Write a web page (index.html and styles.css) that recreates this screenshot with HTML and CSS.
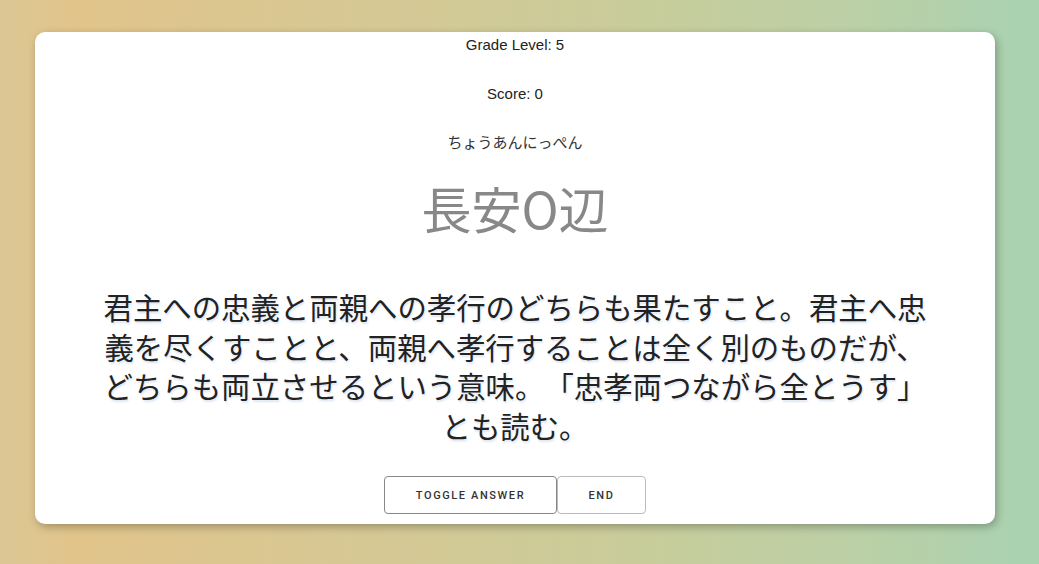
FILE: index.html
```html
<!DOCTYPE html>
<html lang="ja">
<head>
<meta charset="utf-8">
<title>Quiz</title>
<link rel="stylesheet" href="styles.css">
</head>
<body>
<main class="card">
  <p class="meta">Grade Level: 5</p>
  <p class="meta meta-last">Score: 0</p>
  <p class="reading">ちょうあんにっぺん</p>
  <h1 class="word">長安O辺</h1>
  <p class="definition">君主への忠義と両親への孝行のどちらも果たすこと。君主へ忠義を尽くすことと、両親へ孝行することは全く別のものだが、どちらも両立させるという意味。「忠孝両つながら全とうす」とも読む。</p>
  <div class="actions">
    <button class="btn btn-primary" type="button">Toggle Answer</button>
    <button class="btn" type="button">End</button>
  </div>
</main>
</body>
</html>
```

FILE: styles.css
```css
html, body {
  margin: 0;
  height: 100%;
}
body {
  background: linear-gradient(90deg, #dbc795 0%, #e1c48a 7%, #d6c894 35%, #c9cc9a 60%, #bcd0a6 82%, #a8d2b1 100%);
  padding: 32px 44px 40px 35px;
  box-sizing: border-box;
  font-family: "Liberation Sans", Arial, "Noto Sans CJK JP", sans-serif;
  color: #222;
}
.card {
  background: #fff;
  border-radius: 10px;
  box-shadow: 2px 3px 8px rgba(0, 0, 0, 0.28);
  height: 492px;
  box-sizing: border-box;
  display: flex;
  flex-direction: column;
  align-items: center;
  padding-top: 4px;
}
.meta {
  margin: 0 0 32px;
  font-size: 15px;
  line-height: 17px;
}
.meta-last {
  margin-bottom: 31px;
}
.reading {
  margin: 0;
  font-family: "Noto Sans CJK JP", sans-serif;
  font-size: 15px;
  line-height: 18px;
  color: #333;
}
.word {
  margin: 26px 0 0;
  font-family: "Noto Sans CJK JP", sans-serif;
  font-weight: 400;
  font-size: 50px;
  line-height: 60px;
  color: #888;
}
.definition {
  margin: 50px 0 0;
  width: 840px;
  text-align: center;
  font-family: "Noto Sans CJK JP", sans-serif;
  font-size: 29.4px;
  line-height: 39.5px;
  color: #222;
  text-spacing-trim: space-all;
  text-shadow: 1px 2px 2px rgba(120, 150, 200, 0.25);
}
.actions {
  display: flex;
  margin-top: 31px;
}
.btn {
  font-family: Roboto, "Liberation Sans", sans-serif;
  font-weight: 500;
  font-size: 11px;
  letter-spacing: 1.6px;
  text-transform: uppercase;
  color: #333;
  background: #fff;
  border: 1px solid #bbb;
  border-radius: 4px;
  height: 38px;
  width: 89px;
  padding: 0;
  cursor: pointer;
}
.btn-primary {
  width: 173px;
  border-color: #888;
}
```
